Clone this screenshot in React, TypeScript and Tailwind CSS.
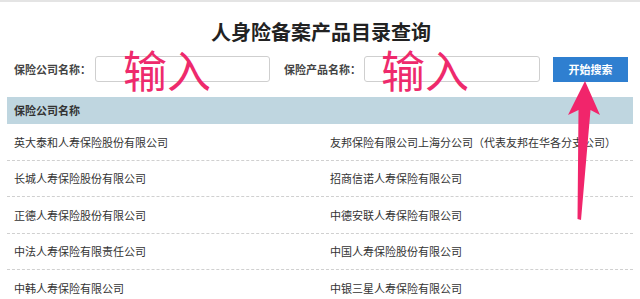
const leftCol = [
  "英大泰和人寿保险股份有限公司",
  "长城人寿保险股份有限公司",
  "正德人寿保险股份有限公司",
  "中法人寿保险有限责任公司",
  "中韩人寿保险有限公司",
];

const rightCol = [
  "友邦保险有限公司上海分公司（代表友邦在华各分支公司）",
  "招商信诺人寿保险有限公司",
  "中德安联人寿保险有限公司",
  "中国人寿保险股份有限公司",
  "中银三星人寿保险有限公司",
];

export default function App() {
  return (
    <main
      className="relative w-[640px] h-[299px] overflow-hidden bg-white border-t-2 border-[#e4e4e4] text-[#333]"
      style={{ fontFamily: '"Noto Sans CJK SC", "Noto Sans", sans-serif' }}
    >
      {/* Title */}
      <h1 className="pt-[18px] text-center text-[20px] leading-[24px] font-bold text-[#222] pl-[2px]">
        人身险备案产品目录查询
      </h1>

      {/* Search form */}
      <div className="mt-[12px] flex items-center h-[26px] pl-[14px]">
        <span className="text-[11px] font-bold text-[#444] w-[81px]">保险公司名称：</span>
        <div className="w-[175px] h-[26px] rounded-[3px] border border-[#cfcfcf] bg-white" />
        <span className="ml-[14px] text-[11px] font-bold text-[#444] w-[80px]">保险产品名称：</span>
        <div className="w-[176px] h-[26px] rounded-[3px] border border-[#cfcfcf] bg-white" />
        <button className="ml-[13px] w-[75px] h-[25px] bg-[#2f7fd0] text-white text-[11px] font-bold">
          开始搜索
        </button>
      </div>

      {/* Result table */}
      <div className="mx-[7px] mt-[15px]">
        <div className="h-[27px] bg-[#bfd6e0] flex items-center px-[7px] text-[11px] font-bold text-[#333]">
          保险公司名称
        </div>
        {leftCol.map((name, i) => (
          <div
            key={name}
            className="grid grid-cols-[316px_1fr] h-[36.5px] items-center border-b border-dashed border-[#d0d0d0] text-[11px] text-[#333]"
          >
            <span className="pl-[7px]">{name}</span>
            <span className="pl-[7px] whitespace-nowrap">{rightCol[i]}</span>
          </div>
        ))}
      </div>

      {/* Annotations */}
      <span className="absolute left-[123px] top-[37px] text-[44px] leading-[60px] font-normal text-[#ee2a6c]">
        输入
      </span>
      <span className="absolute left-[381px] top-[37px] text-[44px] leading-[60px] font-normal text-[#ee2a6c]">
        输入
      </span>
      <svg className="absolute left-0 top-0" width="640" height="299" viewBox="0 0 640 299">
        <path
          d="M585 79 L600 113 L590.5 108 L581 218 L577.5 217 L578.5 108 L568 113 Z"
          fill="#f1256b"
        />
      </svg>
    </main>
  );
}
